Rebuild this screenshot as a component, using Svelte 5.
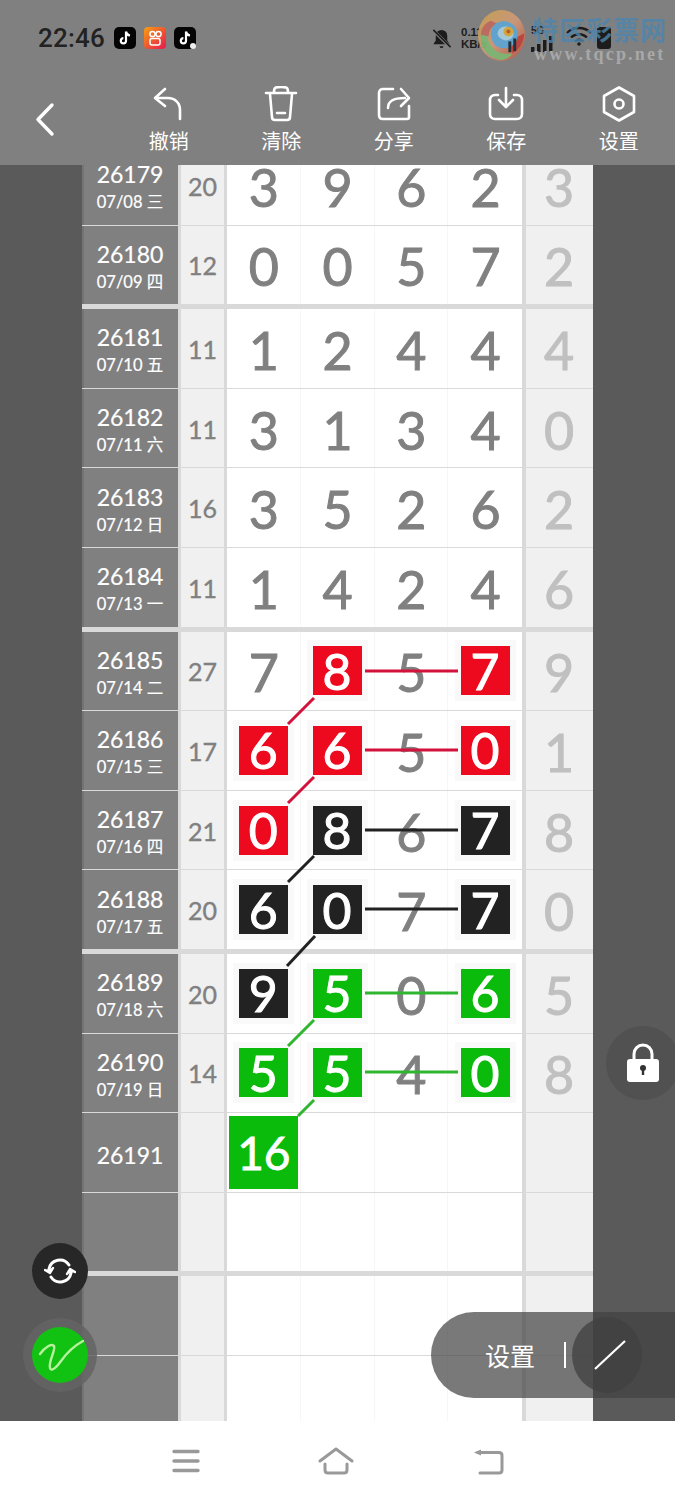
<script>
  const groups = [
    [
      { id: '26179', date: '07/08 三', sum: '20', d: '3962', m: '....', r: '3' },
      { id: '26180', date: '07/09 四', sum: '12', d: '0057', m: '....', r: '2' }
    ],
    [
      { id: '26181', date: '07/10 五', sum: '11', d: '1244', m: '....', r: '4' },
      { id: '26182', date: '07/11 六', sum: '11', d: '3134', m: '....', r: '0' },
      { id: '26183', date: '07/12 日', sum: '16', d: '3526', m: '....', r: '2' },
      { id: '26184', date: '07/13 一', sum: '11', d: '1424', m: '....', r: '6' }
    ],
    [
      { id: '26185', date: '07/14 二', sum: '27', d: '7857', m: '.r.r', r: '9' },
      { id: '26186', date: '07/15 三', sum: '17', d: '6650', m: 'rr.r', r: '1' },
      { id: '26187', date: '07/16 四', sum: '21', d: '0867', m: 'rk.k', r: '8' },
      { id: '26188', date: '07/17 五', sum: '20', d: '6077', m: 'kk.k', r: '0' }
    ],
    [
      { id: '26189', date: '07/18 六', sum: '20', d: '9506', m: 'kg.g', r: '5' },
      { id: '26190', date: '07/19 日', sum: '14', d: '5540', m: 'gg.g', r: '8' },
      { id: '26191', date: '', sum: '', big: '16', d: '', m: '', r: '' },
      { id: '', date: '', sum: '', d: '', m: '', r: '' }
    ],
    [
      { id: '', date: '', sum: '', d: '', m: '', r: '' },
      { id: '', date: '', sum: '', d: '', m: '', r: '' }
    ]
  ];
  const tools = ['撤销', '清除', '分享', '保存', '设置'];
  const red = '#d3123c', black = '#222222', green = '#2fb52f';
  const links = [
    [365, 671, 458, 671, red], [314, 698, 288, 724, red],
    [365, 750, 458, 750, red], [314, 777, 288, 803, red],
    [365, 830, 458, 830, black], [314, 856, 288, 882, black],
    [365, 909, 458, 909, black], [315, 936, 287, 966, black],
    [365, 993, 458, 993, green], [314, 1020, 288, 1046, green],
    [365, 1072, 458, 1072, green], [314, 1100, 298, 1116, green]
  ];
</script>

<div class="page">
  <header class="top">
    <div class="status">
      <span class="time">22:46</span>
      <svg class="app" viewBox="0 0 22 22"><rect width="22" height="22" rx="5" fill="#050505"/><path d="M12 4.500v9.200a2.600 2.600 0 1 1-2.600-2.600M12 4.500c.3 2.300 1.700 3.700 4 4" fill="none" stroke="#fff" stroke-width="2.200"/></svg>
      <svg class="app" viewBox="0 0 22 22"><defs><linearGradient id="ks" x1="0" y1="0" x2="1" y2="1"><stop offset="0" stop-color="#f5a011"/><stop offset="1" stop-color="#e8154f"/></linearGradient></defs><rect width="22" height="22" rx="4" fill="url(#ks)"/><circle cx="8.500" cy="7" r="2.600" fill="none" stroke="#fff" stroke-width="1.500"/><circle cx="14.500" cy="7" r="2.600" fill="none" stroke="#fff" stroke-width="1.500"/><rect x="6" y="11.500" width="10" height="6.500" rx="2" fill="none" stroke="#fff" stroke-width="1.500"/></svg>
      <svg class="app" viewBox="0 0 22 22"><rect width="22" height="22" rx="5" fill="#050505"/><path d="M12 4.500v9.200a2.600 2.600 0 1 1-2.600-2.600M12 4.500c.3 2.300 1.700 3.700 4 4" fill="none" stroke="#fff" stroke-width="2.200"/><circle cx="19" cy="19" r="3" fill="#eee"/></svg>
    </div>

    <div class="sys">
      <svg class="bell" viewBox="0 0 24 24"><path d="M12 3a6 6 0 0 0-6 6v5l-2.500 4h17L18 14V9a6 6 0 0 0-6-6zM10 20a2 2 0 0 0 4 0z" fill="#1c1c1c"/><path d="M3 3l18 18" stroke="#808080" stroke-width="3.400"/><path d="M3.500 3l18 18" stroke="#1c1c1c" stroke-width="1.600"/></svg>
      <span class="speed">0.11<br />KB/s</span>
      <span class="net">
        <span class="fiveg">5G</span>
        <svg class="sig" viewBox="0 0 22 16"><rect x="0" y="11" width="3.500" height="5"/><rect x="6" y="8" width="3.500" height="8"/><rect x="12" y="4" width="3.500" height="12"/><rect x="18" y="0" width="3.500" height="16"/></svg>
      </span>
      <svg class="wifi" viewBox="0 0 26 20"><path d="M1 7a17 17 0 0 1 24 0M5 11.500a11.500 11.500 0 0 1 16 0M9 15.500a5.500 5.500 0 0 1 8 0" fill="none" stroke="#1c1c1c" stroke-width="2.400"/><circle cx="13" cy="18" r="1.800" fill="#1c1c1c"/></svg>
      <span class="batt"></span>
    </div>

    <div class="mark" aria-hidden="true">
      <svg class="mark-logo" viewBox="0 0 50 54">
        <defs>
          <linearGradient id="rim" x1="0" y1="0" x2="1" y2="1">
            <stop offset="0" stop-color="#c9a24d"/>
            <stop offset=".5" stop-color="#cf9a7a"/>
            <stop offset="1" stop-color="#b5533f"/>
          </linearGradient>
        </defs>
        <ellipse cx="25" cy="27" rx="24" ry="26" fill="url(#rim)"/>
        <path d="M4 26c-2 14 8 24 20 26 6 0 10-3 12-7-12 3-24-3-26-19z" fill="#7fb874"/>
        <path d="M36 45c8-4 12-12 12-20L34 32z" fill="#c0413a"/>
        <path d="M14 12c-6 2-10 8-10 14l8 2c0-6 3-11 9-13z" fill="#c26a5f"/>
        <path d="M14 26c0-10 8-15 17-13 8 2 12 9 10 17-2 7-8 10-14 10-7 0-12-5-13-14z" fill="#5fa6d3"/>
        <path d="M21 26c0-6 5-9 10-8 5 1 7 5 6 9-1 3-4 5-8 5-4-1-7-3-8-6z" fill="#a9cfe0"/>
        <circle cx="32" cy="23" r="5" fill="#d8a93a"/>
        <circle cx="32" cy="23" r="2" fill="#c2561f"/>
        <rect x="32" y="33" width="3" height="11" fill="#1f2a33"/>
        <rect x="37" y="30" width="3" height="13" fill="#1f2a33"/>
      </svg>
      <div class="mark-text">
        <span class="mark-cn">特区彩票网</span>
        <span class="mark-url">www.tqcp.net</span>
      </div>
    </div>

    <nav class="tools">
      <button class="tool back" aria-label="返回">
        <svg viewBox="0 0 24 40" width="24" height="40"><path d="M19 5L5 19.500 19 34" fill="none" stroke="#fff" stroke-width="3.400" stroke-linecap="round" stroke-linejoin="round"/></svg>
      </button>
      {#each tools as t, i}
        <button class="tool">
          <svg viewBox="0 0 36 36" width="36" height="36" fill="none" stroke="#fff" stroke-width="2.600" stroke-linecap="round" stroke-linejoin="round">
            {#if i === 0}
              <path d="M14 3L4 12l10 8M5 12h12c7 0 12 5 12 12v9" />
            {:else if i === 1}
              <path d="M3 7h30M11 6c0-5 2-5 7-5s7 0 7 5M7 8l2 23c0 2 1.500 3 3 3h12c2 0 3-1 3-3l2-23M14 27h8" />
            {:else if i === 2}
              <path d="M17 3H7C4.500 3 3 4.500 3 7v22c0 2.500 1.500 4 4 4h24c1.500 0 2-1 2-2V20M12 22c0-7 5-10 17-10M25 3l8 9-8 8" />
            {:else if i === 3}
              <path d="M10 9H7c-3 0-5 2-5 5v14c0 3 2 5 5 5h22c3 0 5-2 5-5V14c0-3-2-5-5-5h-3M18 2v18M11 14l7 7 7-7" />
            {:else}
              <path d="M18 1.500l15 8.500v16l-15 8.500-15-8.500v-16z" /><circle cx="18" cy="18" r="4.500" />
            {/if}
          </svg>
          <span>{t}</span>
        </button>
      {/each}
    </nav>
  </header>

  <main class="board">
    <div class="sheet">
      {#each groups as g}
        <section class="group">
          {#each g as row}
            <div class="row">
              <div class="period">
                <span class="pid">{row.id}</span>
                {#if row.date}<span class="pdate">{row.date}</span>{/if}
              </div>
              <div class="sum">{row.sum}</div>
              <div class="cells">
                {#each [0, 1, 2, 3] as c}
                  <div class="cell">
                    {#if row.big && c === 0}
                      <span class="bigbox">{row.big}</span>
                    {:else if row.m && row.m[c] !== '.'}
                      <span class="frame"><span class="box {row.m[c]}">{row.d[c]}</span></span>
                    {:else if row.d}
                      <span class="num">{row.d[c]}</span>
                    {/if}
                  </div>
                {/each}
              </div>
              <div class="rest">{row.r}</div>
            </div>
          {/each}
        </section>
      {/each}
    </div>

    <svg class="links" viewBox="0 165 675 1256" width="675" height="1256">
      {#each links as l}
        <line x1={l[0]} y1={l[1]} x2={l[2]} y2={l[3]} stroke={l[4]} stroke-width="3" />
      {/each}
    </svg>
  </main>

  <footer class="bottom">
    <svg viewBox="0 0 28 24" width="28" height="24"><path d="M2 2.500h24M2 12h24M2 21.500h24" stroke="#999" stroke-width="3.400" stroke-linecap="round"/></svg>
    <svg viewBox="0 0 36 28" width="36" height="28"><path d="M2 14L18 2l16 12" fill="none" stroke="#999" stroke-width="3" stroke-linecap="round" stroke-linejoin="round"/><path d="M7 17v6c0 2 1 3 3 3h16c2 0 3-1 3-3v-6" fill="none" stroke="#999" stroke-width="3" stroke-linecap="round"/></svg>
    <svg viewBox="0 0 32 28" width="32" height="28"><path d="M2 5.500l7-3v6z" fill="#999"/><path d="M6 5.500h21c2 0 3 1 3 3V23c0 2-1 3-3 3H8" fill="none" stroke="#999" stroke-width="3" stroke-linecap="round" stroke-linejoin="round"/></svg>
  </footer>

  <button class="fab lock" aria-label="锁定">
    <svg viewBox="0 0 34 40" width="34" height="40"><path d="M8 18V11a9 9 0 0 1 18 0v7" fill="none" stroke="#fff" stroke-width="3"/><rect x="1" y="16" width="32" height="23" rx="3" fill="#fff"/><circle cx="17" cy="25" r="3" fill="#333"/><rect x="15.800" y="26" width="2.400" height="6" fill="#333"/></svg>
  </button>
  <button class="fab sync" aria-label="刷新">
    <svg viewBox="0 0 32 32" width="32" height="32" fill="none" stroke="#fff" stroke-width="3" stroke-linecap="round"><path d="M5 14a11 11 0 0 1 20-4M27 18a11 11 0 0 1-20 4"/><path d="M1 15l5 3 3-5M31 17l-5-3-3 5" stroke-width="2.400" stroke-linejoin="round" fill="#fff"/></svg>
  </button>
  <div class="halo">
    <button class="fab pen" aria-label="画笔">
      <svg viewBox="0 0 56 56" width="56" height="56"><path d="M8 27c5-7 12-11 14-8 2 4-6 16-4 22 1 4 6 0 11-7 5-7 11-14 22-20" fill="none" stroke="#b6f29c" stroke-width="2.400" stroke-linecap="round" stroke-linejoin="round"/></svg>
    </button>
  </div>
  <div class="pill">
    <span class="pill-label">设置</span>
    <span class="pill-bar"></span>
    <span class="pill-circle">
      <svg viewBox="0 0 32 30" width="32" height="30"><path d="M1 29L31 1" stroke="#fff" stroke-width="2.200"/></svg>
    </span>
  </div>
</div>

<style>
  :global(body) { margin: 0; background: #5a5a5a; }
  .page {
    position: relative;
    width: 675px;
    height: 1500px;
    overflow: hidden;
    font-family: Lato, "Noto Sans CJK SC", sans-serif;
  }
  button { border: 0; background: none; padding: 0; color: inherit; font: inherit; }

  .top { position: relative; height: 165px; background: #808080; }
  .status {
    position: absolute; left: 38px; top: 25px;
    display: flex; align-items: center; gap: 8px;
  }
  .time { font: 500 26px/26px Roboto, sans-serif; color: #222; margin-right: 1px; letter-spacing: .2px; }
  .app { width: 22px; height: 22px; display: block; }
  .sys {
    position: absolute; left: 430px; top: 25px; width: 184px; height: 26px;
    display: flex; align-items: center;
  }
  .bell { width: 23px; height: 25px; }
  .speed { font: 700 11.500px/12px "Liberation Sans", sans-serif; color: #1c1c1c; margin-left: 8px; width: 28px; }
  .net { display: flex; flex-direction: column; margin-left: 42px; width: 22px; margin-top: 2px; }
  .fiveg { font: 700 10px/10px "Liberation Sans", sans-serif; color: #1c1c1c; }
  .sig { width: 22px; height: 16px; fill: #1c1c1c; }
  .wifi { width: 26px; height: 20px; margin-left: 13px; margin-top: -4px; }
  .batt { width: 14px; height: 22px; border-radius: 3px; background: #1c1c1c; margin-left: 5px; }

  .mark { position: absolute; left: 477px; top: 9px; display: flex; }
  .mark-logo { width: 49px; height: 53px; margin-right: 6px; opacity: .92; }
  .mark-text { display: flex; flex-direction: column; margin-top: 6px; }
  .mark-cn {
    font: 700 26px/28px "Noto Sans CJK SC", sans-serif; color: #4e86ad;
    width: 135px; white-space: nowrap; letter-spacing: 1px; opacity: .8;
  }
  .mark-url {
    font: 700 18px/20px "Liberation Serif", serif; color: #a8a8a8;
    letter-spacing: 2.200px; margin: 1px 0 0 2px; white-space: nowrap;
  }

  .tools {
    position: absolute; left: 0; right: 0; top: 86px;
    display: grid; grid-template-columns: repeat(6, 1fr);
  }
  .tool { display: flex; flex-direction: column; align-items: center; gap: 4px; color: #fff; }
  .tool span { font: 20px/30px "Noto Sans CJK SC", sans-serif; }
  .tool.back { padding-top: 14px; }
  .tool.back svg { margin-left: -22px; }

  .board { position: relative; height: 1256px; overflow: hidden; background: #5a5a5a; }
  .sheet {
    margin: -19px 82px 0;
    display: flex; flex-direction: column; gap: 4px;
    background: #d9d9d9;
  }
  .group { display: flex; flex-direction: column; }
  .row {
    height: 79.600px;
    display: grid;
    grid-template-columns: 96px 3px 43px 3px 295px 4px 67px;
    background: #d9d9d9;
    padding-bottom: 1px;
    box-sizing: border-box;
  }
  .period {
    grid-column: 1; background: #808080; color: #fff;
    display: flex; flex-direction: column; align-items: center; justify-content: center;
    border-left: 2px solid #747474; box-sizing: border-box; padding-right: 2px;
    -webkit-text-stroke: .2px #fff;
  }
  .pid { font-size: 23px; line-height: 26px; margin-top: 5px; }
  .pdate { font-size: 16.500px; line-height: 24px; white-space: nowrap; margin-top: 3px; }
  .sum {
    grid-column: 3; background: #f0f0f0; color: #808080;
    display: flex; align-items: center; justify-content: center;
    font-size: 25px; padding-top: 1px;
    -webkit-text-stroke: .4px #808080;
  }
  .cells {
    grid-column: 5; background: #fff;
    display: grid; grid-template-columns: repeat(4, 1fr);
  }
  .cell {
    display: flex; align-items: center; justify-content: center;
    border-right: 1px solid #f6f6f6; box-sizing: border-box;
    position: relative;
  }
  .cell:last-child { border-right: 0; }
  .num {
    font-size: 52px; line-height: 1; color: #808080;
    padding: 3px 0 0 1px;
    -webkit-text-stroke: 1px #808080;
  }
  .frame { display: flex; padding: 6px; background: #f9f9f9; }
  .box {
    width: 49px; height: 49px;
    display: flex; align-items: center; justify-content: center;
    font-size: 50px; line-height: 1; color: #fff;
    -webkit-text-stroke: 1px #fff;
  }
  .box.r { background: #ee0a1e; }
  .box.k { background: #222; }
  .box.g { background: #0bbb0b; }
  .bigbox {
    width: 69px; height: 73px; margin-left: 1px; background: #0bbb0b; color: #fff;
    display: flex; align-items: center; justify-content: center;
    font-size: 46px; line-height: 1; padding-top: 2px; box-sizing: border-box;
    -webkit-text-stroke: .8px #fff;
  }
  .rest {
    grid-column: 7; background: #f0f0f0; color: #c0c0c0;
    display: flex; align-items: center; justify-content: center;
    font-size: 52px; padding: 3px 1px 0 0;
    -webkit-text-stroke: 1px #c0c0c0;
  }
  .links { position: absolute; left: 0; top: 0; pointer-events: none; }

  .bottom {
    height: 79px; background: #fff;
    display: flex; align-items: center; justify-content: center; gap: 118px;
  }

  .fab { display: flex; align-items: center; justify-content: center; border-radius: 50%; }
  .lock {
    position: absolute; left: 606px; top: 1026px; width: 74px; height: 74px;
    background: #515151;
  }
  .sync {
    position: absolute; left: 32px; top: 1243px; width: 56px; height: 56px;
    background: #272727;
  }
  .halo {
    position: absolute; left: 23px; top: 1318px; width: 74px; height: 74px;
    border-radius: 50%; background: rgba(100, 100, 100, .85);
    display: flex; align-items: center; justify-content: center;
  }
  .pen { width: 56px; height: 56px; background: #12c212; }
  .pill {
    position: absolute; left: 431px; right: 0; top: 1312px; height: 86px;
    border-radius: 43px 0 0 43px;
    background: rgba(64, 64, 64, .7);
    color: #fff;
    display: flex; align-items: center;
  }
  .pill-label { font: 25px/30px "Noto Sans CJK SC", sans-serif; margin-left: 54px; }
  .pill-bar { width: 2px; height: 26px; background: #fff; margin-left: 29px; }
  .pill-circle {
    width: 70px; height: 76px; border-radius: 50%;
    background: rgba(64, 64, 64, .75); margin-left: 6px;
    display: flex; align-items: center; justify-content: center;
  }
  .pill-circle svg { margin-left: 5px; }
</style>
